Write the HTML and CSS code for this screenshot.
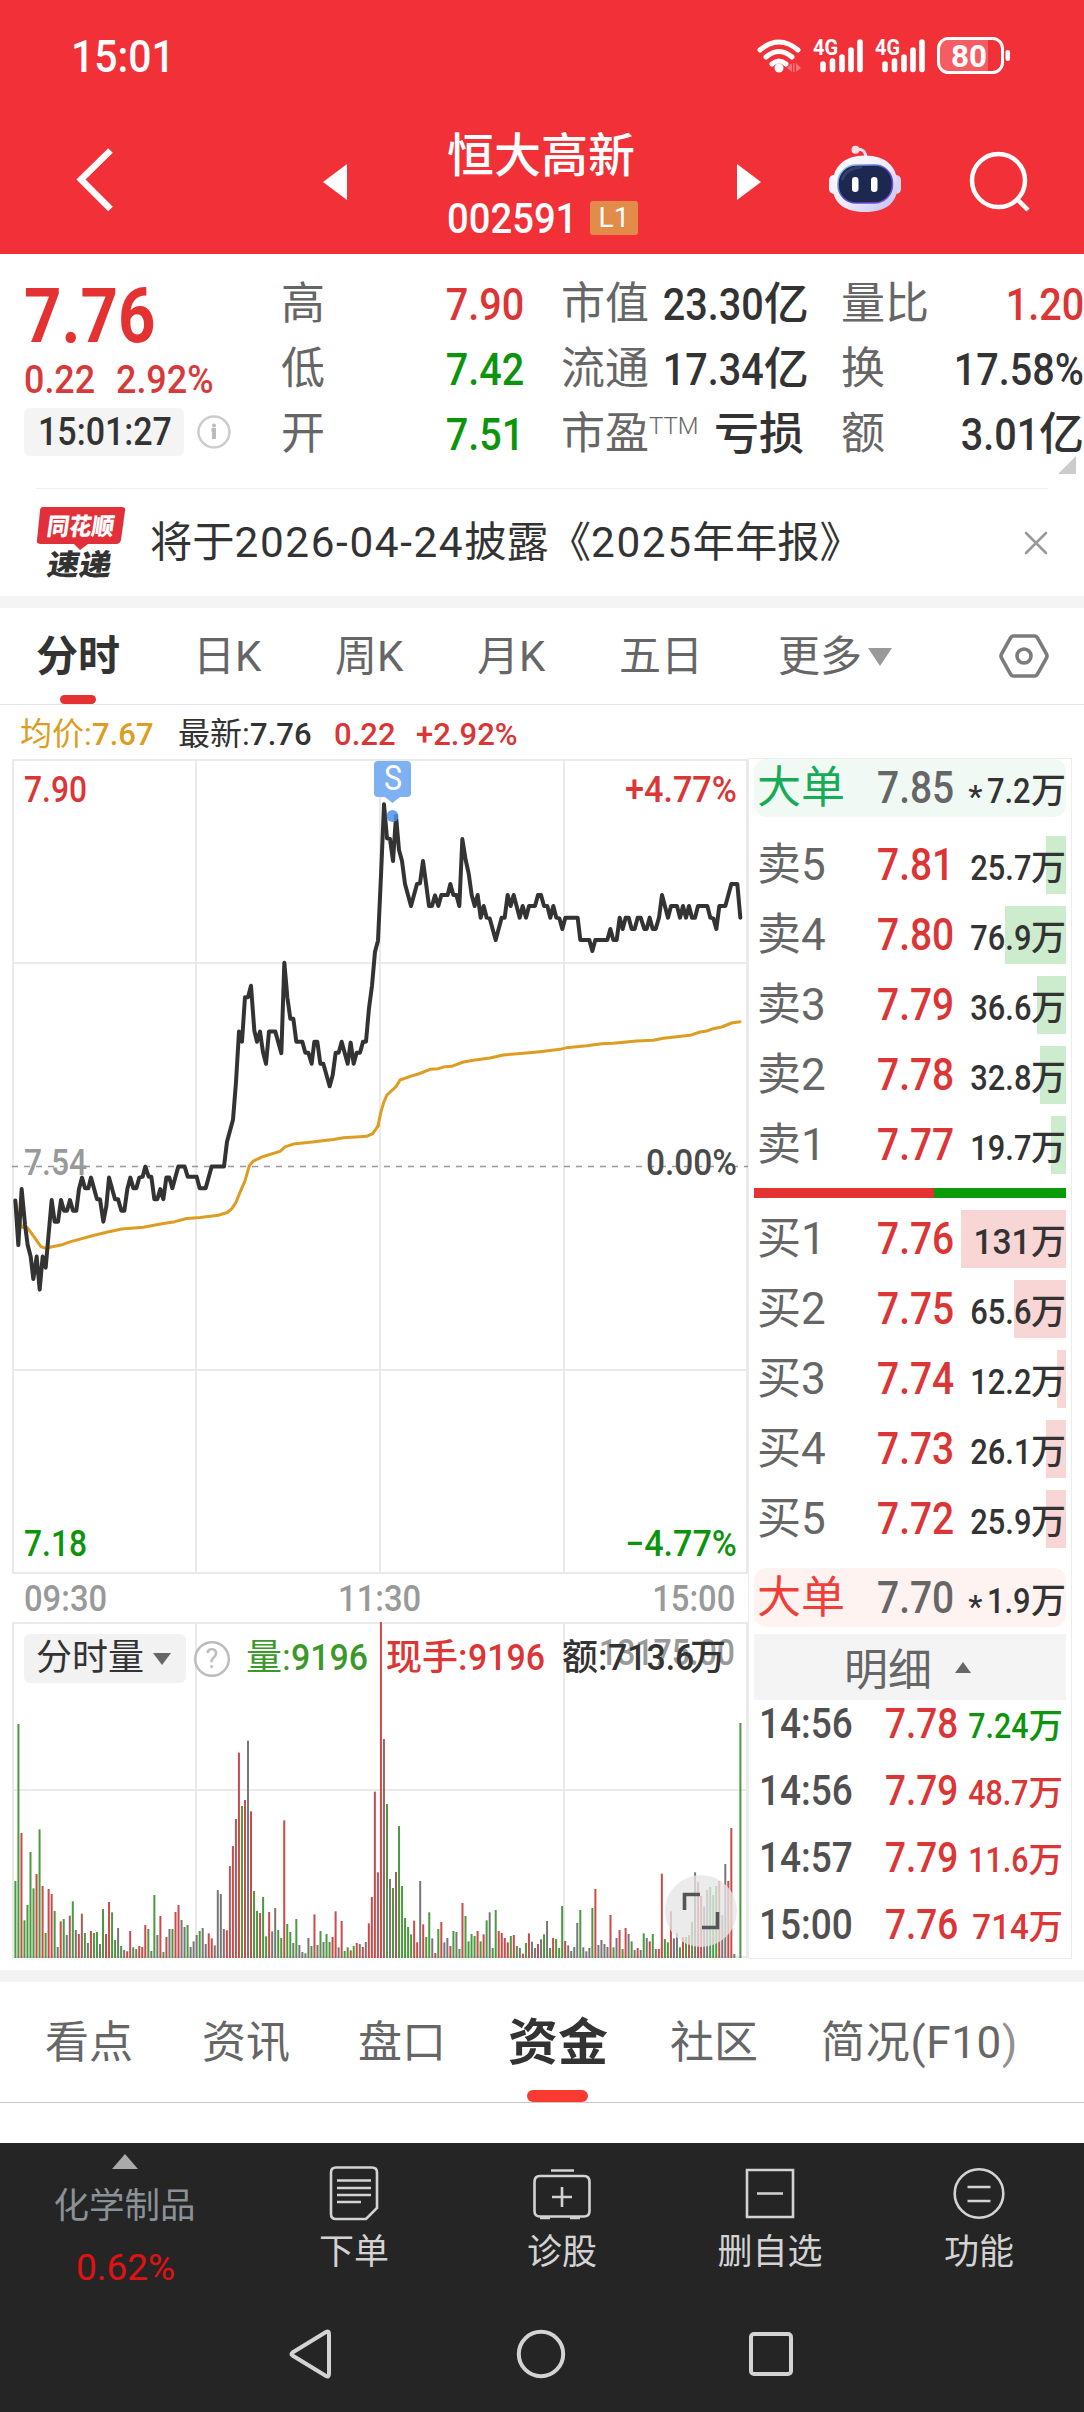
FILE: index.html
```html
<!DOCTYPE html>
<html lang="zh-CN">
<head>
<meta charset="utf-8">
<title>恒大高新 002591</title>
<link rel="stylesheet" href="styles.css">
</head>
<body>
<header class="top">
  <div class="status">
    <span class="clock"><span class="n l">15:01</span></span>
    <svg class="status-icons" width="256" height="40" viewBox="756 36 256 40" fill="none">
      <g stroke="#fff" stroke-width="5" stroke-linecap="round">
        <path d="M760 50Q779 34 798 50M766 57Q779 46 792 57M772 64Q779 58 786 64"/>
      </g>
      <circle cx="779" cy="68" r="4.500" fill="#fff"/>
      <path d="M787 68l5-5v9zM793 63v9h1.500v-9zM796 63l5 5-5 4z" fill="#f9757b"/>
      <g>
        <text x="813" y="55" class="sig-text" textLength="25" lengthAdjust="spacingAndGlyphs">4G</text>
        <path d="M823 64V69.500M832.500 61V69.500M842 57V69.500M851 50V69.500M860 42V69.500" stroke="#fff" stroke-width="5.600" stroke-linecap="round"/>
      </g>
      <g transform="translate(62 0)">
        <text x="813" y="55" class="sig-text" textLength="25" lengthAdjust="spacingAndGlyphs">4G</text>
        <path d="M823 64V69.500M832.500 61V69.500M842 57V69.500M851 50V69.500M860 42V69.500" stroke="#fff" stroke-width="5.600" stroke-linecap="round"/>
      </g>
      <path d="M988 40H949a10 10 0 0 0-10 10v11a10 10 0 0 0 10 10h39z" fill="#f55d63"/>
      <rect x="938.500" y="38.500" width="64" height="34" rx="10" stroke="#fff" stroke-width="3"/>
      <rect x="1005.500" y="50" width="4.500" height="11" rx="2" fill="#fff"/>
      <text x="951" y="67" class="bat-text" textLength="36" lengthAdjust="spacingAndGlyphs">80</text>
    </svg>
  </div>
  <div class="titlebar">
    <svg class="back" width="40" height="68" viewBox="75 146 40 68" fill="none"><path d="M110.500 150.500L81 179.500l29.500 29.500" stroke="#fff" stroke-width="6.500"/></svg>
    <svg class="prev" width="24" height="36" viewBox="0 0 24 36"><path d="M0 18L24 0v36z" fill="#fff"/></svg>
    <div class="name">
      <h1>恒大高新</h1>
      <div class="code"><span class="n l">002591</span><b>L1</b></div>
    </div>
    <svg class="next" width="24" height="36" viewBox="0 0 24 36"><path d="M24 18L0 0v36z" fill="#fff"/></svg>
    <svg class="robot" width="74" height="70" viewBox="828 145 74 70">
      <defs>
        <linearGradient id="shell" x1="0" y1="0" x2="1" y2="1"><stop offset="0" stop-color="#fff"/><stop offset=".55" stop-color="#eeeafa"/><stop offset="1" stop-color="#b9bdf0"/></linearGradient>
        <linearGradient id="rim" x1="0" y1="0" x2="1" y2="1"><stop offset="0" stop-color="#8fe3ff"/><stop offset=".5" stop-color="#5a45c8"/><stop offset="1" stop-color="#8b4be0"/></linearGradient>
      </defs>
      <path d="M856 149q10-1 10 10" fill="none" stroke="#f3e4f2" stroke-width="3"/>
      <circle cx="855.500" cy="149.700" r="4" fill="#f6dfe8"/>
      <rect x="829" y="175" width="11" height="19" rx="5" fill="#f3f1fd"/><rect x="890" y="175" width="11" height="19" rx="5" fill="#d5d4f5"/>
      <path d="M865 155.500c21 0 32.500 11 32.500 30 0 17-11 26.500-32.500 26.500s-32.500-9.500-32.500-26.500c0-19 11.500-30 32.500-30z" fill="url(#shell)"/>
      <rect x="838" y="165" width="54.500" height="38" rx="18" fill="#1d2850" stroke="url(#rim)" stroke-width="1.500"/>
      <path d="M842 180q4-12 20-13" fill="none" stroke="#44507c" stroke-width="3" opacity=".6"/>
      <rect x="852" y="177" width="6.500" height="15" rx="3.200" fill="#fff"/><rect x="871" y="177" width="6.500" height="15" rx="3.200" fill="#fff"/>
    </svg>
    <svg class="search" width="62" height="64" viewBox="968 150 62 64" fill="none" stroke="#fff" stroke-width="4.500"><ellipse cx="998.500" cy="180.500" rx="26.500" ry="26.500"/><path d="M1017 199l11 11"/></svg>
  </div>
</header>

<section class="quote">
  <div class="last">
    <div class="price"><span class="n l">7.76</span></div>
    <div class="chg"><span class="n l">0.22</span><span class="n l">2.92%</span></div>
    <div class="stamp">
      <span class="pill"><span class="n l">15:01:27</span></span>
      <svg width="34" height="36" viewBox="0 0 34 36" fill="none"><circle cx="17" cy="18" r="15.500" stroke="#ccc" stroke-width="2.500"/><circle cx="17" cy="11.500" r="2" fill="#bbb"/><path d="M14.500 16H17v9" stroke="#bbb" stroke-width="4"/></svg>
    </div>
  </div>
  <dl class="metrics">
    <div><dt>高</dt><dd class="up"><span class="n">7.90</span></dd></div>
    <div><dt>低</dt><dd class="down"><span class="n">7.42</span></dd></div>
    <div><dt>开</dt><dd class="down"><span class="n">7.51</span></dd></div>
  </dl>
  <dl class="metrics caps">
    <div><dt>市值</dt><dd><span class="n">23.30</span>亿</dd></div>
    <div><dt>流通</dt><dd><span class="n">17.34</span>亿</dd></div>
    <div><dt>市盈<sup>TTM</sup></dt><dd>亏损</dd></div>
  </dl>
  <dl class="metrics">
    <div><dt>量比</dt><dd class="up"><span class="n">1.20</span></dd></div>
    <div><dt>换</dt><dd><span class="n">17.58%</span></dd></div>
    <div><dt>额</dt><dd><span class="n">3.01</span>亿</dd></div>
  </dl>
  <i class="corner"></i>
</section>

<section class="notice">
  <svg class="brand" width="92" height="76" viewBox="36 504 92 76">
    <path d="M43 506h79q4 0 3 4l-4 29q-1 4-5 4H88l-8 6-6-6H41q-5 0-4-4l3-29q0-4 3-4z" fill="#e2303a"/>
    <text x="0" y="0" transform="translate(46 534) skewX(-8)" class="brand-top" textLength="67" lengthAdjust="spacingAndGlyphs">同花顺</text>
    <text x="0" y="0" transform="translate(46 574) skewX(-10)" class="brand-sub" textLength="64" lengthAdjust="spacingAndGlyphs">速递</text>
  </svg>
  <p>将于<span>2026-04-24</span>披露《<span>2025</span>年年报》</p>
  <svg width="24" height="24" viewBox="0 0 24 24" fill="none" stroke="#999" stroke-width="2.600" stroke-linecap="round"><path d="M2 2l20 20M22 2L2 22"/></svg>
</section>

<nav class="periods">
  <a class="on">分时</a><a>日K</a><a>周K</a><a>月K</a><a>五日</a><a>更多<i></i></a>
  <svg width="52" height="46" viewBox="0 0 52 46" fill="none" stroke="#7b7b7b" stroke-width="3.600"><path d="M15.500 3h21q2 0 3 2l9 16q1 2 0 4l-9 16q-1 2-3 2h-21q-2 0-3-2l-9-16q-1-2 0-4l9-16q1-2 3-2z"/><circle cx="26" cy="23" r="7"/></svg>
</nav>

<div class="legend">
  <span class="avg">均价:<span class="n l">7.67</span></span><span>最新:<span class="n l">7.76</span></span><span class="up"><span class="n l">0.22</span></span><span class="up"><span class="n l">+2.92%</span></span>
</div>

<main class="board">
  <div class="charts">
    <svg class="chart" width="748" height="816" viewBox="0 758 748 816">
      <g class="grid"><path d="M12 760H748M12 963H748M12 1370H748M12 1573H748M13 759V1574M196 759V1574M380 759V1574M564 759V1574M747 759V1574"/></g>
      <path d="M12 1166.500H748" stroke="#999" stroke-width="1.500" stroke-dasharray="6 6" fill="none"/>
      <text x="24" y="802" class="up" textLength="63" lengthAdjust="spacingAndGlyphs">7.90</text>
      <text x="625" y="802" class="up" textLength="112" lengthAdjust="spacingAndGlyphs">+4.77%</text>
      <text x="24" y="1175" class="flat" textLength="63" lengthAdjust="spacingAndGlyphs">7.54</text>
      <text x="646" y="1175" class="zero" textLength="91" lengthAdjust="spacingAndGlyphs">0.00%</text>
      <text x="24" y="1556" class="down" textLength="63" lengthAdjust="spacingAndGlyphs">7.18</text>
      <text x="625" y="1556" class="down" textLength="112" lengthAdjust="spacingAndGlyphs">−4.77%</text>
      <g class="line avg-line">
        <polyline transform="translate(0 600) scale(.33333 .45914)" points="46,1308 55,1345 66,1366 83,1368 105,1390 122,1408 137,1412 160,1408 183,1405 210,1398 240,1392 280,1384 320,1377 365,1370 430,1366 490,1358 525,1354 560,1347 600,1345 655,1340 682,1334 695,1326 708,1312 720,1290 735,1265 748,1232 760,1222 790,1212 840,1201 855,1191 880,1185 930,1181 1000,1175 1030,1171 1080,1169 1100,1168 1118,1162 1135,1145"/>
        <polyline transform="translate(360 740) scale(.33333)" points="54,1157 63,1115 72,1085 81,1065 108,1040 120,1020 160,1006 175,1002 210,988 235,986 255,980 275,979 310,966 340,961 390,954 430,945 490,940 540,935 600,928 620,923 680,917 725,911 760,910 830,903 880,901 910,895 990,886 1020,876 1040,873 1060,866 1085,861 1115,849 1140,845"/>
      </g>
      <g class="line price-line">
        <polyline transform="translate(0 600) scale(.33333 .45914)" points="46,1308 55,1405 65,1283 75,1360 83,1405 92,1430 100,1479 110,1430 119,1502 128,1430 137,1454 146,1380 155,1307 164,1354 174,1354 183,1307 192,1330 201,1330 210,1307 219,1330 229,1330 237,1283 246,1258 255,1281 265,1281 273,1258 291,1305 300,1305 310,1354 319,1320 327,1258 345,1305 354,1305 364,1330 373,1330 382,1283 391,1258 400,1281 409,1281 418,1258 428,1256 436,1234 446,1256 454,1256 463,1305 472,1305 481,1283 490,1305 499,1258 508,1258 517,1281 535,1234 554,1234 563,1256 590,1256 599,1281 617,1281 635,1234 672,1234 681,1180 699,1132 708,1050 717,940 726,962 735,865 744,865 753,840 763,938 771,962 780,940 789,985 798,1010 807,940 826,940 844,987 853,790 862,865 871,912 880,912 889,962 907,962 916,986 925,986 935,1010 943,962 952,962 961,1010 970,1010 989,1059 998,1035 1007,986 1016,986 1025,962 1043,1010 1052,964 1061,1010 1070,986 1080,986 1089,962 1098,962 1107,889 1116,840 1125,766 1134,742 1143,600 1152,447"/>
        <polyline transform="translate(360 740) scale(.33333)" points="72,193 81,295 90,297 99,363 108,228 117,330 126,363 135,432 153,498 171,432 180,430 189,363 198,430 207,498 216,498 225,466 235,498 244,465 263,465 271,432 280,465 289,465 298,498 307,297 317,360 326,400 335,465 344,498 353,465 362,533 371,498 380,533 389,535 407,600 425,533 434,533 443,465 452,498 461,465 479,533 488,498 498,533 507,498 525,498 534,465 543,465 552,498 562,498 571,533 580,498 589,533 598,535 607,567 616,533 653,533 661,600 688,600 697,633 706,600 742,600 751,567 760,600 770,600 779,533 788,567 797,533 806,533 815,567 824,567 833,533 842,533 853,567 860,567 869,533 878,567 887,567 897,533 906,465 924,533 933,498 951,498 960,533 969,498 978,533 987,498 996,533 1005,533 1014,498 1042,498 1051,533 1060,535 1069,567 1078,498 1096,498 1114,432 1132,432 1141,533"/>
      </g>
      <path d="M378 761h29q4 0 4 4v28q0 4-4 4h-7l-7.500 6-7.500-6h-7q-4 0-4-4v-28q0-4 4-4z" fill="#7db1f1"/>
      <text x="384" y="790" class="mark" textLength="18" lengthAdjust="spacingAndGlyphs">S</text>
      <circle cx="392.500" cy="816" r="6" fill="#4d94ea" opacity=".85"/>
    </svg>
    <div class="axis"><span class="n l">09:30</span><span class="n c">11:30</span><span class="n">15:00</span></div>
    <div class="volume">
      <svg class="chart" width="748" height="336" viewBox="0 1622 748 336">
        <g class="grid"><path d="M12 1623H748M12 1790H748M12 1957H748M13 1622V1958M196 1622V1958M564 1622V1958M747 1622V1958"/></g>
        <text x="599" y="1665" class="flat" textLength="136" lengthAdjust="spacingAndGlyphs">13175.00</text>
        <g id="bars"></g>
      </svg>
      <div class="vol-head">
        <span class="picker">分时量<i></i></span>
        <svg width="36" height="36" viewBox="0 0 36 36"><circle cx="18" cy="18" r="16.800" fill="none" stroke="#bbb" stroke-width="2.400"/><text x="18" y="27" class="help">?</text></svg>
        <span class="vol">量:<span class="n l">9196</span></span>
        <span class="hand">现手:<span class="n l">9196</span></span>
        <span class="amt">额:<span class="n l">713.6</span></span><span class="wan">万</span>
      </div>
      <svg class="expand" width="72" height="72" viewBox="0 0 72 72" fill="none"><circle cx="36" cy="36" r="36" fill="#e6e6e6" opacity=".78"/><path d="M35 19.500H19.500V35M37 52.500H52.500V37" stroke="#555" stroke-width="3.600"/></svg>
    </div>
  </div>

  <aside class="book">
    <div class="row big sell"><span>大单</span><b><span class="n">7.85</span></b><em><i>*</i><span class="n">7.2</span>万</em></div>
    <div class="asks">
      <div class="row" style="--w:20px"><span>卖5</span><b><span class="n">7.81</span></b><em><span class="n">25.7</span>万</em></div>
      <div class="row" style="--w:61px"><span>卖4</span><b><span class="n">7.80</span></b><em><span class="n">76.9</span>万</em></div>
      <div class="row" style="--w:29px"><span>卖3</span><b><span class="n">7.79</span></b><em><span class="n">36.6</span>万</em></div>
      <div class="row" style="--w:26px"><span>卖2</span><b><span class="n">7.78</span></b><em><span class="n">32.8</span>万</em></div>
      <div class="row" style="--w:15px"><span>卖1</span><b><span class="n">7.77</span></b><em><span class="n">19.7</span>万</em></div>
    </div>
    <div class="ratio"><i></i></div>
    <div class="bids">
      <div class="row" style="--w:105px"><span>买1</span><b><span class="n">7.76</span></b><em><span class="n whole">131</span>万</em></div>
      <div class="row" style="--w:52px"><span>买2</span><b><span class="n">7.75</span></b><em><span class="n">65.6</span>万</em></div>
      <div class="row" style="--w:9px"><span>买3</span><b><span class="n">7.74</span></b><em><span class="n">12.2</span>万</em></div>
      <div class="row" style="--w:20px"><span>买4</span><b><span class="n">7.73</span></b><em><span class="n">26.1</span>万</em></div>
      <div class="row" style="--w:20px"><span>买5</span><b><span class="n">7.72</span></b><em><span class="n">25.9</span>万</em></div>
    </div>
    <div class="row big buy"><span>大单</span><b><span class="n">7.70</span></b><em><i>*</i><span class="n">1.9</span>万</em></div>
    <div class="detail-head">明细<i></i></div>
    <div class="ticks">
      <div><span class="n l">14:56</span><b><span class="n">7.78</span></b><em class="down"><span class="n">7.24</span>万</em></div>
      <div><span class="n l">14:56</span><b><span class="n">7.79</span></b><em class="up"><span class="n">48.7</span>万</em></div>
      <div><span class="n l">14:57</span><b><span class="n">7.79</span></b><em class="up"><span class="n">11.6</span>万</em></div>
      <div><span class="n l">15:00</span><b><span class="n">7.76</span></b><em class="up"><span class="n whole">714</span>万</em></div>
    </div>
  </aside>
</main>

<nav class="sections"><a>看点</a><a>资讯</a><a>盘口</a><a class="on">资金</a><a>社区</a><a class="f10">简况(F10<span>)</span></a></nav>

<footer class="dock">
  <div class="tools">
    <div class="sector"><i></i><span>化学制品</span><strong>0.62%</strong></div>
    <a><svg width="60" height="56" viewBox="0 0 60 56"><path d="M12 2.500H48Q53 2.500 53 7.500V43L42 54H12Q7 54 7 49V7.500Q7 2.500 12 2.500zM13 15.500H47M13 23H47M13 30H47M13 37H37"/></svg>下单</a>
    <a><svg width="60" height="56" viewBox="0 0 60 56"><path d="M19 5.500H42M8 11H52Q57.500 11 57.500 17V46Q57.500 51.500 52 51.500H8Q2.500 51.500 2.500 46V17Q2.500 11 8 11zM8 53H18M38 53H48M20 32H40M30 22V42"/></svg>诊股</a>
    <a><svg width="60" height="56" viewBox="0 0 60 56"><path d="M7 5H53V52H7zM17 28.500H43"/></svg>删自选</a>
    <a><svg width="60" height="56" viewBox="0 0 60 56"><circle cx="30" cy="28.500" r="24.300"/><path d="M18.500 22H41.500M18.500 36H41.500"/></svg>功能</a>
  </div>
  <div class="sysnav">
    <svg width="44" height="50" viewBox="0 0 44 50"><path d="M3.500 23.500L37 3q3-1.500 3 2V45q0 3.500-3 2L3.500 26.500q-2-1.500 0-3z"/></svg>
    <svg width="50" height="50" viewBox="0 0 50 50"><circle cx="25" cy="25" r="22.200"/></svg>
    <svg width="46" height="46" viewBox="0 0 46 46"><rect x="3" y="3" width="40" height="40" rx="3"/></svg>
  </div>
</footer>
<script src="script.js"></script>
</body>
</html>
```
FILE: styles.css
```css
* { box-sizing: border-box; margin: 0; padding: 0; }
body {
  width: 1084px;
  height: 2412px;
  overflow: hidden;
  background: #fff;
  color: #333;
  font-family: Roboto, "Noto Sans CJK SC", sans-serif;
}
i, em { font-style: normal; }
svg { display: block; flex: none; }

/* condensed numerals */
.n { display: inline-block; transform: scaleX(.88); transform-origin: right; }
.n.l { transform-origin: left; }
.n.c { transform-origin: center; }
.n.whole { transform: scaleX(.96); }

.up { color: #dc3535; fill: #dc3535; }
.down { color: #0d940d; fill: #0d940d; }
.flat { fill: #999; }
.zero { fill: #4a4a4a; }

/* header */
.top { height: 254px; background: #f13038; color: #fff; }
.status { height: 114px; padding: 0 72px 0 71px; display: flex; justify-content: space-between; align-items: center; }
.status-icons { margin-top: -2px; }
.clock { font-size: 45px; font-weight: 500; line-height: 50px; }
.clock .n { transform: scaleX(.91); }
.sig-text { font-size: 22px; font-weight: 700; fill: #fff; }
.bat-text { font-size: 31px; font-weight: 700; fill: #fff; }
.titlebar { height: 140px; margin-top: -2px; display: flex; align-items: flex-start; }
.back { margin: 34px 0 0 75px; }
.prev { margin: 52px 0 0 208px; }
.name { margin: 15px 0 0 100px; width: 190px; }
.name h1 { font-size: 47px; font-weight: 500; line-height: 58px; white-space: nowrap; }
.code { display: flex; align-items: center; height: 38px; margin-top: 14px; font-size: 42px; font-weight: 500; }
.code b { margin-left: 13px; flex: none; width: 48px; height: 34px; border-radius: 3px; background: #e38b49; font-size: 28px; font-weight: 400; line-height: 34px; text-align: center; }
.code .n { width: 130px; transform: scaleX(.91); }
.next { margin: 52px 0 0 100px; }
.robot { margin: 33px 0 0 67px; }
.search { margin: 38px 0 0 66px; }

/* quote summary */
.quote { position: relative; height: 234px; padding-left: 24px; display: flex; }
.last { width: 257px; flex: none; padding-top: 24px; }
.price { font-size: 76px; font-weight: 700; line-height: 76px; color: #e43232; }
.price .n { transform: scaleX(.86); }
.chg { display: grid; grid-template-columns: 92px 1fr; margin-top: 4px; font-size: 39px; line-height: 44px; font-weight: 500; color: #d63a3a; }
.chg .n { transform: scaleX(.92); }
.stamp { display: flex; align-items: center; gap: 13px; margin-top: 6px; }
.pill { width: 160px; height: 48px; padding-left: 14px; border-radius: 6px; background: #f4f4f4; font-size: 38px; line-height: 48px; font-weight: 500; }
.pill .n { transform: scaleX(.895); }
.metrics { width: 243px; padding-top: 18px; margin-right: 37px; flex: none; }
.metrics:last-of-type { margin-right: 0; }
.metrics > div { display: flex; justify-content: space-between; height: 65px; line-height: 65px; font-size: 45px; white-space: nowrap; }
.metrics dt { font-size: 44px; color: #666; font-weight: 400; }
.metrics dd { font-weight: 500; }
.caps > div:not(:last-child) dd { margin-right: 3px; }
.metrics sup { font-size: 24px; line-height: 0; vertical-align: 15px; font-weight: 300; }
.corner { position: absolute; right: 8px; bottom: 14px; border: 9px solid #ccc; border-left-color: transparent; border-top-color: transparent; }

/* notice */
.notice { height: 108px; margin: 0 36px; border-top: 1px solid #eee; display: flex; align-items: center; }
.notice p { margin-left: 22px; flex: 1; font-size: 42.300px; line-height: 60px; white-space: nowrap; }
.notice p span { letter-spacing: 1.600px; }
.brand-top { font-size: 24px; font-weight: 900; fill: #fff; }
.brand-sub { font-size: 29px; font-weight: 900; fill: #333; }

/* period tabs */
.periods { height: 109px; border-top: 12px solid #f4f4f4; border-bottom: 1px solid #e4e4e4; display: grid; grid-template-columns: 157px 142px 142px 142px 159px 220px 1fr; padding-left: 36px; font-size: 42px; line-height: 98px; color: #666; }
.periods a { position: relative; height: 96px; }
.periods .on { font-weight: 700; color: #333; }
.periods .on::after { content: ""; position: absolute; left: 24px; bottom: 0; width: 36px; height: 9px; border-radius: 5px; background: #e43232; }
.periods i { display: inline-block; margin-left: 6px; vertical-align: 5px; border: 12px solid transparent; border-top: 18px solid #999; border-bottom: 0; }
.periods svg { margin-top: 25px; }

/* legend above the chart */
.legend { height: 53px; padding-left: 20px; display: grid; grid-template-columns: 158px 156px 82px 1fr; font-size: 32px; line-height: 59px; font-weight: 500; }
.legend > span:nth-child(-n+2) { font-weight: 400; }
.legend .n { font-weight: 500; transform: scaleX(.97); }
.avg { color: #dc9d22; }

/* charts and order book */
.board { display: grid; grid-template-columns: 748px 324px; height: 1200px; }
.chart text { font-size: 36px; font-weight: 500; }
.chart .mark { font-size: 35px; font-weight: 400; fill: #fff; }
.grid path { stroke: #eaeaea; stroke-width: 2; fill: none; }
.line polyline { fill: none; vector-effect: non-scaling-stroke; stroke-linejoin: round; stroke-linecap: round; }
.price-line polyline { stroke: #333; stroke-width: 4; }
.avg-line polyline { stroke: #dc9d22; stroke-width: 3; }
.axis { height: 48px; padding: 0 13px 0 24px; display: flex; justify-content: space-between; font-size: 36px; line-height: 51px; font-weight: 500; color: #999; }
.axis .n { transform: scaleX(.91); }
.volume { position: relative; }
.vol-head { position: absolute; left: 24px; top: 12px; display: grid; grid-template-columns: 170px 52px 140px 176px 128px 40px; align-items: center; font-size: 36px; line-height: 49px; white-space: nowrap; }
.vol-head .n { font-weight: 500; transform: scaleX(.94); }
.picker { width: 162px; padding-left: 12px; border-radius: 6px; background: #f2f2f2; }
.picker i { display: inline-block; margin-left: 9px; vertical-align: 5px; border: 9px solid transparent; border-top: 12px solid #666; border-bottom: 0; }
.help { font-size: 27px; fill: #bbb; text-anchor: middle; }
.vol { color: #3c982b; }
.hand { color: #dc3535; font-weight: 500; }
.amt, .wan { font-weight: 500; }
.expand { position: absolute; left: 665px; top: 253px; }

.book { border: 1px solid #ececec; padding: 0 5px; }
.row { height: 58px; padding: 0 0 0 3px; display: grid; grid-template-columns: 90px 107px 1fr; align-items: baseline; font-size: 44px; line-height: 57px; white-space: nowrap; color: #666; background: linear-gradient(var(--bar), var(--bar)) right / var(--w, 0) 100% no-repeat; }
.row b { text-align: right; font-size: 45px; font-weight: 500; color: #dc3535; }
.row b .n { transform: scaleX(.865); }
.row em { text-align: right; font-size: 35px; font-weight: 500; color: #333; }
.row em, .ticks em { margin-left: -20px; }
.asks, .bids { display: grid; gap: 12px; }
.asks { --bar: #cdebcd; margin-top: 19px; }
.bids { --bar: #f9d6d6; }
.ratio { height: 10px; margin: 14px 0 12px; background: #0a9a0a; }
.ratio i { display: block; width: 180px; height: 10px; background: #e43232; }
.big { border-radius: 12px; }
.big b { color: #666; }
.big em i { font-size: 32px; position: relative; top: 4px; margin-right: -1px; }
.big.sell { background: #f1f9f5; color: #16ab57; line-height: 58px; }
.big.buy { height: 59px; margin-top: 20px; background: #fff3f2; color: #ee4038; line-height: 60px; }
.detail-head { height: 66px; margin-top: 7px; display: flex; align-items: center; gap: 23px; padding-left: 90px; background: #f4f4f4; color: #666; font-size: 44px; }
.detail-head i { border: 8px solid transparent; border-bottom: 11px solid #666; border-top: 0; }
.ticks { margin-top: -10px; }
.ticks > div { height: 67px; padding: 0 3px 0 5px; display: grid; grid-template-columns: 100px 99px 1fr; align-items: baseline; font-size: 42px; font-weight: 500; line-height: 67px; color: #505050; white-space: nowrap; }
.ticks b { text-align: right; font-weight: 500; color: #dc3535; }
.ticks em { text-align: right; font-size: 34.500px; font-weight: 500; }

/* section tabs */
.sections { position: relative; height: 133px; margin-top: 12px; border-top: 12px solid #f4f4f4; padding-left: 45px; display: grid; grid-template-columns: 157px 156px 150px 162px 151px 1fr; font-size: 44px; line-height: 123px; color: #666; border-bottom: 1px solid #c8c8c8; white-space: nowrap; }
.sections a { position: relative; height: 120px; }
.sections .on { font-size: 50px; font-weight: 700; color: #333; }
.sections .on::after { content: ""; position: absolute; left: 19px; bottom: 0; width: 61px; height: 12px; border-radius: 6px; background: #fc3a32; }
.f10 { letter-spacing: .7px; }
.f10 span { color: #909090; }

/* bottom bar */
.dock { height: 269px; margin-top: 40px; background: #252525; color: #d3d3d3; }
.tools { height: 160px; display: grid; grid-template-columns: 250px 208px 208px 208px 1fr; }
.tools a { display: flex; flex-direction: column; align-items: center; padding-top: 22px; font-size: 35px; line-height: 63px; }
.tools svg { fill: none; stroke: #d3d3d3; stroke-width: 2.6; }
.sector { display: flex; flex-direction: column; align-items: center; padding: 11px 1px 0 0; font-size: 35.500px; line-height: 51px; color: #8a9297; }
.sector i { border: 13px solid transparent; border-bottom: 15px solid #aaa; border-top: 0; margin-bottom: 12px; }
.sector strong { margin: 10px 0 0 2px; font-size: 37px; font-weight: 400; color: #e01212; }
.sysnav { height: 109px; padding: 0 290px 7px 289px; display: flex; justify-content: space-between; align-items: center; }
.sysnav svg { fill: none; stroke: #d3d3d3; stroke-width: 4; }
```
FILE: script.js
```js
// Per-minute volume: colour letter, then the bar's top; the baseline is at 1374 and the unit is 1/3 px.
const data = `g1143 g672 r999 g1261 g1215 g1056 g1165 r1122 g988 r1158 g1299 r1167 r1182 g1233 k1341 r1264 g1257 k1305 m1247 g1204
k1290 r1302 m1241 g1299 k1329 r1293 g1299 g1296 k1332 g1227 r1302 r1206 g1237 g1320 k1284 g1338 k1350 r1354 r1293 g1342
k1347 r1338 r1341 r1275 g1287 k1353 g1185 k1305 r1248 g1356 r1311 k1287 g1287 r1236 r1215 k1260 k1281 g1275 k1341 k1324
k1305 g1293 k1284 k1332 r1300 r1315 k1336 k1170 k1182 k1287 r1291 m1098 r1038 m957 r758 g918 r900 k722 r934 g1173
g1233 r1239 g1191 g1309 r1236 k1294 k1224 g1290 g1314 r961 g1272 g1296 k1329 g1257 k1335 k1356 g1360 k1314 g1338 r1243
k1335 g1293 k1326 g1302 g1326 r1311 r1234 k1342 r1263 g1353 g1342 r1351 g1338 r1329 k1332 r1341 k1326 r1270 r1191 r875
m1117 r366 m717 g912 k1137 g1164 m1116 g978 g1158 g1254 g1281 g1303 r1262 r1327 k1143 r1273 g1311 g1237 k1315 r1359
g1287 r1266 k1327 k1314 r1338 g1293 k1296 g1347 r1209 g1248 g1324 g1302 g1308 r1293 g1324 r1303 g1261 k1237 g1344 g1230
r1293 r1299 r1314 r1327 g1308 r1305 g1338 k1344 r1361 g1329 r1300 k1325 k1344 r1332 k1318 g1303 k1263 g1344 r1314 g1317
g1344 g1218 r1323 k1336 k1353 k1341 k1269 g1230 k1342 k1354 k1344 g1224 r1167 k1335 k1320 k1332 k1341 r1245 g1342 k1314
r1290 g1347 r1284 k1302 g1324 k1350 r1344 k1350 g1300 k1314 r1324 g1302 k1347 r1347 r1121 g1317 g1327 r1234 k1315 k1300
g1342 r1311 g1311 r1305 g1266 k1117 r1147 r1188 k1220 k1170 g1161 g1185 g1158 r1143 k1245 k1092 r1143 r984 k1362 k1374 g669`.split(/\s+/);
const colour = { g: '#4b9a3f', r: '#cb4a4a', k: '#777', m: '#a65d60' };
const bars = document.getElementById('bars');
data.forEach((d, i) => {
  const top = Number(d.slice(1));
  const r = document.createElementNS('http://www.w3.org/2000/svg', 'rect');
  r.setAttribute('x', (14.4 + i * 3.0208).toFixed(2));
  r.setAttribute('y', 1500 + top / 3);
  r.setAttribute('width', 2);
  r.setAttribute('height', (1374 - top) / 3);
  r.setAttribute('fill', colour[d[0]]);
  bars.appendChild(r);
});
```
